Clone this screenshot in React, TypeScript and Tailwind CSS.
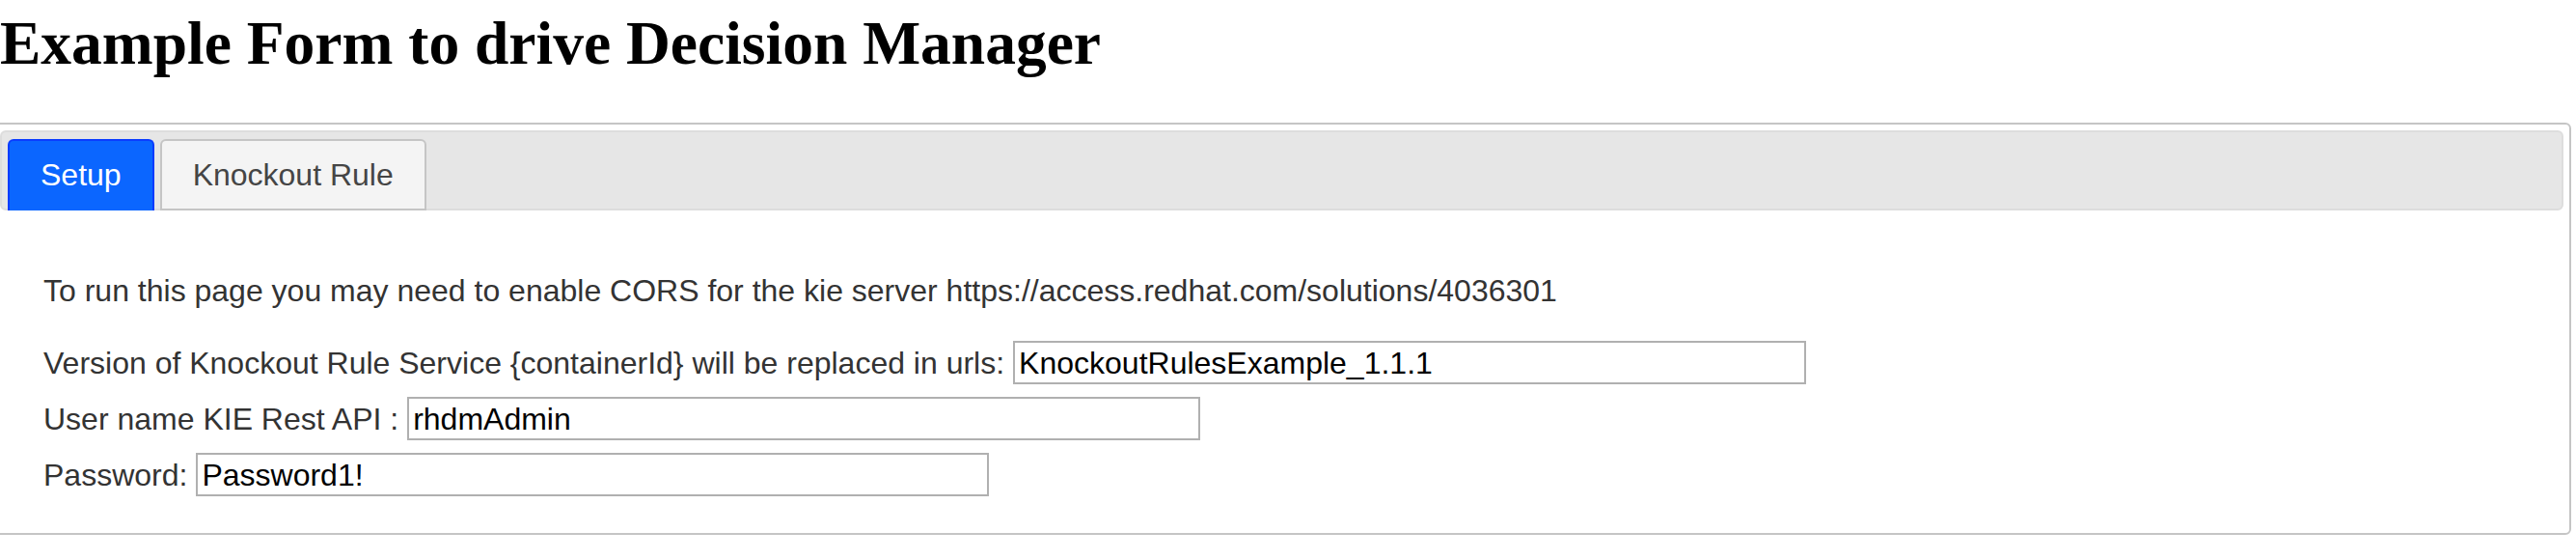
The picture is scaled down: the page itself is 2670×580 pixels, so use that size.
import { useState } from 'react';

type TabKey = 'setup' | 'knockout';

const tabs: { key: TabKey; label: string }[] = [
  { key: 'setup', label: 'Setup' },
  { key: 'knockout', label: 'Knockout Rule' },
];

const Field = ({ label, value }: { label: string; value: string }) => (
  <div className="flex items-baseline gap-[9px] leading-[36px]">
    <span>{label}</span>
    <input
      type="text"
      defaultValue={value}
      className="w-[822px] h-[45px] border-2 border-[#b0b0b0] bg-white px-[4px] text-[32px] leading-normal text-black font-['Liberation_Sans',Arial,sans-serif] outline-none"
    />
  </div>
);

export default function App() {
  const [active, setActive] = useState<TabKey>('setup');

  return (
    <div className="w-[2670px] h-[580px] overflow-hidden bg-white">
      <h1 className="pt-[8px] mb-[45px] text-[63.5px] leading-[74px] font-bold text-black font-['Liberation_Serif','Times_New_Roman',serif]">
        Example Form to drive Decision Manager
      </h1>

      {/* tabs widget */}
      <div className="-ml-[8px] mr-[5px] border-2 border-[#c5c5c5] rounded-[6px] p-[6px] bg-white text-[32px] font-['Liberation_Sans',Arial,sans-serif]">
        <ul className="flex items-end border-2 border-[#dddddd] rounded-[6px] bg-[#e6e6e6] pt-[6px] px-[6px]">
          {tabs.map((t) => {
            const on = t.key === active;
            return (
              <li
                key={t.key}
                onClick={() => setActive(t.key)}
                className={
                  on
                    ? 'mt-[1px] mr-[6px] -mb-[2px] pb-[2px] border-2 border-b-0 border-[#0a3cff] rounded-t-[6px] bg-[#0b66ff] text-white cursor-pointer'
                    : 'mt-[1px] mr-[6px] -mb-[2px] border-2 border-[#c5c5c5] rounded-t-[6px] bg-[#f4f4f4] text-[#454545] cursor-pointer'
                }
              >
                <a className="block px-[32px] py-[16px] leading-[38px]">{t.label}</a>
              </li>
            );
          })}
        </ul>

        <div className="pt-[32px] pb-[32px] px-[45px] text-[#333333]">
          {active === 'setup' ? (
            <>
              <p className="mt-[33px] leading-[36px]">
                To run this page you may need to enable CORS for the kie server https://access.redhat.com/solutions/4036301
              </p>
              <div className="mt-[34px] flex flex-col gap-[13px]">
                <Field
                  label="Version of Knockout Rule Service {containerId} will be replaced in urls:"
                  value="KnockoutRulesExample_1.1.1"
                />
                <Field label="User name KIE Rest API :" value="rhdmAdmin" />
                <Field label="Password:" value="Password1!" />
              </div>
            </>
          ) : (
            <p className="mt-[33px] leading-[36px]">Knockout Rule</p>
          )}
        </div>
      </div>
    </div>
  );
}
